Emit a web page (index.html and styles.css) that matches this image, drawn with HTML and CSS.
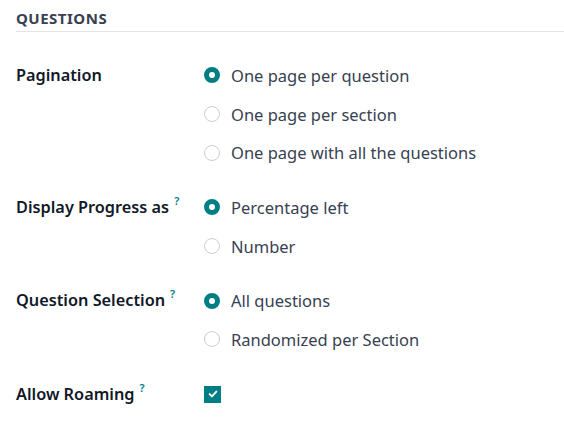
FILE: index.html
```html
<!DOCTYPE html>
<html>
<head>
<meta charset="utf-8">
<link rel="stylesheet" href="styles.css">
</head>
<body>
<div class="page">
  <div class="section-title">QUESTIONS</div>
  <div class="form">
    <div class="row">
      <div class="label">Pagination</div>
      <div class="options">
        <div class="option"><span class="radio checked"></span><span class="opt-text">One page per question</span></div>
        <div class="option"><span class="radio"></span><span class="opt-text">One page per section</span></div>
        <div class="option"><span class="radio"></span><span class="opt-text">One page with all the questions</span></div>
      </div>
    </div>
    <div class="row">
      <div class="label">Display Progress as<sup class="help">?</sup></div>
      <div class="options">
        <div class="option"><span class="radio checked"></span><span class="opt-text">Percentage left</span></div>
        <div class="option"><span class="radio"></span><span class="opt-text">Number</span></div>
      </div>
    </div>
    <div class="row">
      <div class="label">Question Selection<sup class="help">?</sup></div>
      <div class="options">
        <div class="option"><span class="radio checked"></span><span class="opt-text">All questions</span></div>
        <div class="option"><span class="radio"></span><span class="opt-text">Randomized per Section</span></div>
      </div>
    </div>
    <div class="row">
      <div class="label">Allow Roaming<sup class="help">?</sup></div>
      <div class="options">
        <div class="option"><span class="checkbox"><svg viewBox="0 0 16 16" width="12" height="12"><path d="M3.5 8.2 L6.6 11.2 L12.5 4.8" fill="none" stroke="#fff" stroke-width="2.6" stroke-linecap="round" stroke-linejoin="round"/></svg></span></div>
      </div>
    </div>
  </div>
</div>
</body>
</html>
```

FILE: styles.css
```css
html, body {
  margin: 0;
  padding: 0;
  background: #fff;
}
body {
  font-family: "Noto Sans", "Open Sans", sans-serif;
  color: #1f2937;
}
.page {
  padding: 8px 0 0 16px;
}
.section-title {
  font-size: 15px;
  font-weight: 700;
  color: #374151;
  letter-spacing: 0.5px;
  line-height: 20px;
  padding-bottom: 3px;
  border-bottom: 1px solid #e2e4e8;
}
.form {
  padding-top: 24px;
  display: flex;
  flex-direction: column;
  gap: 16px;
}
.row {
  display: grid;
  grid-template-columns: 187px 1fr;
}
.label {
  font-size: 16.3px;
  font-weight: 600;
  color: #111827;
  line-height: 38px;
  height: 38px;
}
.help {
  color: #017e84;
  font-size: 11px;
  font-weight: 600;
  margin-left: 5px;
  vertical-align: top;
  position: relative;
  top: -6px;
}
.options {
  display: flex;
  flex-direction: column;
}
.option {
  display: flex;
  align-items: center;
  height: 38.7px;
}
.radio {
  width: 16px;
  height: 16px;
  border-radius: 50%;
  border: 1px solid #c9cdd3;
  box-sizing: border-box;
  margin-right: 11px;
  margin-left: 1px;
  flex: none;
}
.radio.checked {
  border: 5px solid #017e84;
  background: #fff;
}
.opt-text {
  font-size: 16.5px;
  color: #374151;
}
.checkbox {
  width: 17px;
  height: 17px;
  background: #017e84;
  display: flex;
  align-items: center;
  justify-content: center;
  margin-left: 1px;
}
```
